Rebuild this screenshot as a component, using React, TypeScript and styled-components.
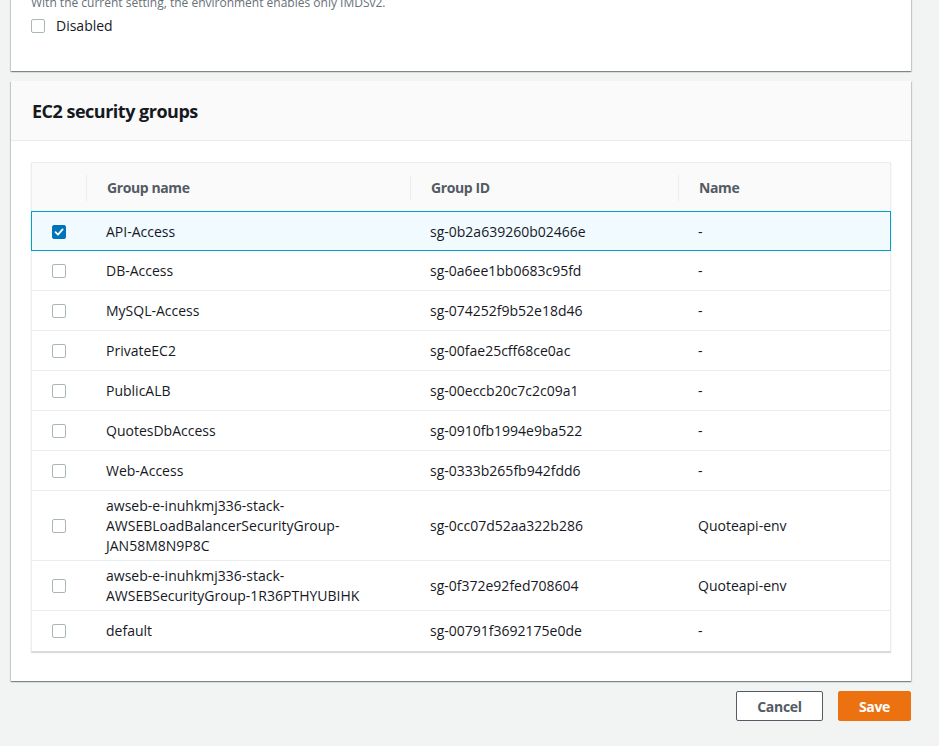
import React from "react";
import styled, { createGlobalStyle } from "styled-components";

const Global = createGlobalStyle`
  html, body { margin: 0; padding: 0; }
  body {
    background: #f2f3f3;
    font-family: "Open Sans", "Noto Sans", Arial, sans-serif;
    color: #16191f;
    overflow: hidden;
  }
`;

const Page = styled.div`
  width: 900px;
  padding: 0 0 0 11px;
  margin-top: -5px;
  display: flex;
  flex-direction: column;
  gap: 10px;
`;

const Card = styled.section`
  background: #fff;
  box-shadow: 0 1px 1px 0 rgba(0, 28, 36, 0.3), 1px 1px 1px 0 rgba(0, 28, 36, 0.15),
    -1px 1px 1px 0 rgba(0, 28, 36, 0.15);
`;

const CardBody = styled.div<{ $pad: string }>`
  padding: ${(p) => p.$pad};
  display: flex;
  flex-direction: column;
`;

const Description = styled.div`
  font-size: 12px;
  line-height: 16px;
  color: #687078;
`;

const CheckLabel = styled.label`
  margin-top: 5px;
  display: flex;
  align-items: center;
  gap: 11px;
  font-size: 14px;
  line-height: 20px;
  color: #16191f;
`;

const CardHeader = styled.header`
  background: #fafafa;
  border-bottom: 1px solid #eaeded;
  padding: 19px 20px 18px 21px;
`;

const Title = styled.h2`
  margin: 0;
  font-size: 18px;
  line-height: 22px;
  font-weight: 700;
  letter-spacing: -0.5px;
  color: #16191f;
`;

const Table = styled.div`
  border: 1px solid #eaeded;
  border-bottom-color: #d5dbdb;
  box-shadow: 0 1px 1px 0 rgba(0, 28, 36, 0.15);
  display: flex;
  flex-direction: column;
`;

const cols = "55px 324px 268px 1fr";

const HeadRow = styled.div`
  display: grid;
  grid-template-columns: ${cols};
  height: 48px;
  background: #fafafa;
`;

const HeadCell = styled.div<{ $divider?: boolean }>`
  position: relative;
  display: flex;
  align-items: center;
  padding-left: 20px;
  font-size: 14px;
  font-weight: 700;
  letter-spacing: -0.4px;
  color: #545b64;
  &::before {
    content: "";
    display: ${(p) => (p.$divider ? "block" : "none")};
    position: absolute;
    left: -1px;
    top: 12px;
    bottom: 10px;
    width: 1px;
    background: #eaeded;
  }
`;

const Row = styled.div<{ $selected?: boolean; $last?: boolean }>`
  display: grid;
  grid-template-columns: ${cols};
  min-height: 40px;
  box-sizing: border-box;
  background: ${(p) => (p.$selected ? "#f1faff" : "#fff")};
  border-bottom: 1px solid ${(p) => (p.$selected ? "#00a1c9" : p.$last ? "transparent" : "#eaeded")};
  border-top: ${(p) => (p.$selected ? "1px solid #00a1c9" : "none")};
  border-left: ${(p) => (p.$selected ? "1px solid #00a1c9" : "none")};
  border-right: ${(p) => (p.$selected ? "1px solid #00a1c9" : "none")};
  margin: ${(p) => (p.$selected ? "0 -1px" : "0")};
`;

const Cell = styled.div<{ $check?: boolean }>`
  display: flex;
  align-items: center;
  padding: 5px 0 4px ${(p) => (p.$check ? "20px" : "19px")};
  font-size: 14px;
  line-height: 20px;
  color: #16191f;
  word-break: break-word;
`;

const Box = styled.span<{ $checked?: boolean }>`
  width: 14px;
  height: 14px;
  box-sizing: border-box;
  border-radius: 2px;
  border: 1px solid ${(p) => (p.$checked ? "#0073bb" : "#aab7b8")};
  background: ${(p) => (p.$checked ? "#0073bb" : "#fff")};
  display: inline-flex;
  align-items: center;
  justify-content: center;
  flex: none;
`;

const Actions = styled.div`
  display: flex;
  justify-content: flex-end;
  gap: 15px;
`;

const Button = styled.button<{ $primary?: boolean }>`
  height: 30px;
  width: ${(p) => (p.$primary ? "73px" : "87px")};
  box-sizing: border-box;
  padding: 0;
  border-radius: 2px;
  border: 1px solid ${(p) => (p.$primary ? "#ec7211" : "#545b64")};
  background: ${(p) => (p.$primary ? "#ec7211" : "#fff")};
  color: ${(p) => (p.$primary ? "#fff" : "#545b64")};
  font-family: inherit;
  font-size: 14px;
  font-weight: 700;
  letter-spacing: -0.3px;
`;

const Checkbox = ({ checked }: { checked?: boolean }) => (
  <Box $checked={checked}>
    {checked && (
      <svg width="10" height="10" viewBox="0 0 10 10">
        <polyline points="1.5,5.2 4,7.6 8.6,2.4" fill="none" stroke="#fff" strokeWidth="1.8" strokeLinecap="round" strokeLinejoin="round" />
      </svg>
    )}
  </Box>
);

const rows: { name: string[]; id: string; label: string; selected?: boolean }[] = [
  { name: ["API-Access"], id: "sg-0b2a639260b02466e", label: "-", selected: true },
  { name: ["DB-Access"], id: "sg-0a6ee1bb0683c95fd", label: "-" },
  { name: ["MySQL-Access"], id: "sg-074252f9b52e18d46", label: "-" },
  { name: ["PrivateEC2"], id: "sg-00fae25cff68ce0ac", label: "-" },
  { name: ["PublicALB"], id: "sg-00eccb20c7c2c09a1", label: "-" },
  { name: ["QuotesDbAccess"], id: "sg-0910fb1994e9ba522", label: "-" },
  { name: ["Web-Access"], id: "sg-0333b265fb942fdd6", label: "-" },
  {
    name: ["awseb-e-inuhkmj336-stack-", "AWSEBLoadBalancerSecurityGroup-", "JAN58M8N9P8C"],
    id: "sg-0cc07d52aa322b286",
    label: "Quoteapi-env",
  },
  {
    name: ["awseb-e-inuhkmj336-stack-", "AWSEBSecurityGroup-1R36PTHYUBIHK"],
    id: "sg-0f372e92fed708604",
    label: "Quoteapi-env",
  },
  { name: ["default"], id: "sg-00791f3692175e0de", label: "-" },
];

export default function App() {
  return (
    <>
      <Global />
      <Page>
        <Card>
          <CardBody $pad="0 20px 35px 20px">
            <Description>With the current setting, the environment enables only IMDSv2.</Description>
            <CheckLabel>
              <Checkbox />
              Disabled
            </CheckLabel>
          </CardBody>
        </Card>
        <Card>
          <CardHeader>
            <Title>EC2 security groups</Title>
          </CardHeader>
          <CardBody $pad="21px 20px 29px 20px">
            <Table>
              <HeadRow>
                <HeadCell />
                <HeadCell $divider>Group name</HeadCell>
                <HeadCell $divider>Group ID</HeadCell>
                <HeadCell $divider>Name</HeadCell>
              </HeadRow>
              {rows.map((r, i) => (
                <Row key={r.id} $selected={r.selected} $last={i === rows.length - 1}>
                  <Cell $check>
                    <Checkbox checked={r.selected} />
                  </Cell>
                  <Cell>
                    <div>
                      {r.name.map((n, j) => (
                        <div key={j}>{n}</div>
                      ))}
                    </div>
                  </Cell>
                  <Cell>{r.id}</Cell>
                  <Cell>{r.label}</Cell>
                </Row>
              ))}
            </Table>
          </CardBody>
        </Card>
        <Actions>
          <Button>Cancel</Button>
          <Button $primary>Save</Button>
        </Actions>
      </Page>
    </>
  );
}
